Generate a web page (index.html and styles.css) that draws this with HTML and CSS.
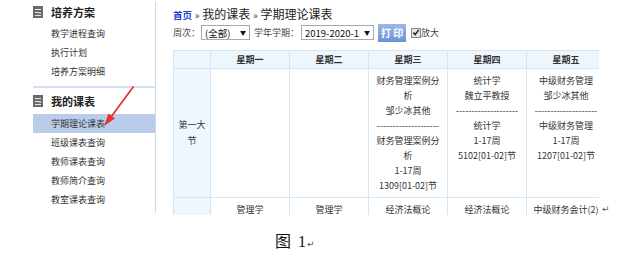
FILE: index.html
```html
<!DOCTYPE html>
<html lang="zh-CN">

<head>
    <meta charset="UTF-8">
    <title>学期理论课表</title>
    <link rel="stylesheet" href="styles.css">
</head>

<body>
    <div class="doc">
        <div class="shot">
            <div class="side">
                <div class="group">
                    <div class="group-title">
                        <svg class="ico" width="10" height="12" viewBox="0 0 10 12">
                            <rect x="0" y="0" width="10" height="12" fill="#6a6a6a"/>
                            <rect x="2" y="3" width="6" height="1" fill="#e8e8e8"/>
                            <rect x="2" y="6" width="4" height="1" fill="#e8e8e8"/>
                            <rect x="6" y="6" width="2" height="2" fill="#bbb"/>
                            <rect x="2" y="9" width="6" height="1" fill="#e8e8e8"/>
                        </svg>
                        培养方案
                    </div>
                    <div class="item">教学进程查询</div>
                    <div class="item">执行计划</div>
                    <div class="item">培养方案明细</div>
                </div>
                <div class="group second">
                    <div class="group-title">
                        <svg class="ico" width="10" height="12" viewBox="0 0 10 12">
                            <rect x="0" y="0" width="10" height="12" fill="#6a6a6a"/>
                            <rect x="2" y="3" width="6" height="1" fill="#e8e8e8"/>
                            <rect x="2" y="6" width="4" height="1" fill="#e8e8e8"/>
                            <rect x="6" y="6" width="2" height="2" fill="#bbb"/>
                            <rect x="2" y="9" width="6" height="1" fill="#e8e8e8"/>
                        </svg>
                        我的课表
                    </div>
                    <div class="item active">学期理论课表</div>
                    <div class="item">班级课表查询</div>
                    <div class="item">教师课表查询</div>
                    <div class="item">教师简介查询</div>
                    <div class="item">教室课表查询</div>
                </div>
            </div>

            <div class="main">
                <div class="crumb">
                    <a class="home" href="#">首页</a>
                    <span class="sep">»</span> 我的课表 <span class="sep">»</span> 学期理论课表
                </div>
                <div class="tools">
                    <span>周次：</span>
                    <span class="select w1">(全部)<span class="caret">▼</span></span>
                    <span class="lbl">学年学期：</span>
                    <span class="select w2">2019-2020-1<span class="caret">▼</span></span>
                    <span class="btn">打 印</span>
                    <span class="check">
                        <svg width="9" height="9" viewBox="0 0 9 9">
                            <path d="M1.5 4.5 L3.6 6.8 L7.6 1.6" fill="none" stroke="#222" stroke-width="1.6"/>
                        </svg>
                    </span>
                    <span>放大</span>
                </div>

                <table class="timetable">
                    <colgroup>
                        <col class="c0">
                        <col class="cd">
                        <col class="cd">
                        <col class="cd">
                        <col class="cd">
                        <col class="cd">
                    </colgroup>
                    <tr>
                        <th></th>
                        <th>星期一</th>
                        <th>星期二</th>
                        <th>星期三</th>
                        <th>星期四</th>
                        <th>星期五</th>
                    </tr>
                    <tr>
                        <td class="sec">第一大节</td>
                        <td></td>
                        <td></td>
                        <td>财务管理案例分析<br>邹少冰其他<br>--------------------<br>财务管理案例分析<br>1-17周<br>1309[01-02]节</td>
                        <td>统计学<br>魏立平教授<br>--------------------<br>统计学<br>1-17周<br>5102[01-02]节</td>
                        <td>中级财务管理<br>邹少冰其他<br>--------------------<br>中级财务管理<br>1-17周<br>1207[01-02]节</td>
                    </tr>
                    <tr>
                        <td class="sec"></td>
                        <td>管理学</td>
                        <td>管理学</td>
                        <td>经济法概论</td>
                        <td>经济法概论</td>
                        <td>中级财务会计(2)</td>
                    </tr>
                </table>
            </div>
        </div>
        <span class="mark">↵</span>
    </div>

    <p class="caption"><span class="fig">图</span>1<span class="mark">↵</span></p>

    <svg class="arrow" width="622" height="262" viewBox="0 0 622 262">
        <path d="M133.5 86.5 L111 117" stroke="#e8342c" stroke-width="1.8" fill="none"/>
        <polygon points="104,126 108.5,113.5 115,118.5" fill="#e8342c"/>
    </svg>
</body>

</html>
```

FILE: styles.css
```css
body {
    margin: 0;
    font-family: "Noto Sans CJK SC", "Noto Sans", sans-serif;
    color: #333;
    background: #fff;
    position: relative;
}

.doc {
    display: flex;
    align-items: flex-end;
    padding: 2px 0 0 33px;
}

.shot {
    display: flex;
    width: 566px;
    height: 213px;
    overflow: hidden;
}

.mark {
    font-family: "DejaVu Sans", sans-serif;
    font-size: 9px;
    color: #555;
    line-height: 12px;
    margin-left: 3px;
}

/* sidebar */
.side {
    width: 122px;
    height: 211px;
    flex: none;
    border-right: 1px solid #c9d9ef;
}

.group-title {
    display: flex;
    align-items: center;
    height: 20px;
    font-size: 11px;
    font-weight: bold;
    color: #222;
    margin-bottom: 2px;
}

.ico {
    margin-right: 8px;
}

.second {
    border-top: 2px solid #d5e1f2;
    margin-top: 5px;
}

.second .group-title {
    margin: 3px 0;
}

.item {
    height: 19px;
    line-height: 19px;
    padding-left: 18px;
    font-size: 9px;
    color: #333;
}

.item.active {
    background-color: #b9cdeb;
}

/* main */
.main {
    margin-left: 17px;
    padding-top: 3px;
    flex: none;
    width: 430px;
    font-size: 9px;
}

.crumb {
    height: 18px;
    line-height: 18px;
    font-size: 12px;
    color: #222;
    white-space: nowrap;
}

.home {
    font-size: 9.5px;
    font-weight: bold;
    color: #1f3fcf;
    text-decoration: none;
}

.sep {
    font-size: 10px;
    color: #444;
}

.tools {
    display: flex;
    align-items: center;
    height: 17px;
    margin-top: 1px;
    white-space: nowrap;
    color: #444;
}

.select {
    display: inline-flex;
    align-items: center;
    justify-content: space-between;
    height: 13px;
    padding: 0 3px;
    border: 1px solid #a9a9a9;
    color: #111;
    font-size: 9.5px;
    box-sizing: content-box;
}

.select.w1 {
    width: 41px;
    margin-left: 1px;
}

.select.w2 {
    width: 65px;
}

.caret {
    font-size: 6px;
    color: #111;
}

.lbl {
    margin: 0 2px 0 4px;
}

.btn {
    display: inline-block;
    width: 28px;
    height: 18px;
    line-height: 18px;
    margin: 0 5px 0 4px;
    text-align: center;
    color: #fff;
    font-size: 10px;
    font-weight: bold;
    background: linear-gradient(#9ab8ea, #6a93d8);
}

.check {
    width: 8px;
    height: 8px;
    border: 1px solid #888;
    background: #e6e6e6;
    display: inline-flex;
    align-items: center;
    justify-content: center;
}

/* timetable */
.timetable {
    border-collapse: collapse;
    table-layout: fixed;
    width: 431px;
    margin-top: 9px;
    font-size: 9px;
    color: #333;
}

.c0 {
    width: 37px;
}

.cd {
    width: 79px;
}

.timetable th,
.timetable td {
    border: 1px solid #d4e5f6;
    text-align: center;
    padding: 4px 4px 4px;
    line-height: 15px;
    vertical-align: top;
}

.timetable th {
    background-color: #eef6fd;
    padding: 1px 2px;
    font-weight: bold;
    color: #333;
}

.timetable td.sec {
    background-color: #eff7fe;
    vertical-align: middle;
    padding: 0 4px;
    line-height: 16px;
}

.caption {
    margin: 13px 0 0 275px;
    font-family: "Liberation Serif", "Noto Sans CJK SC", serif;
    font-size: 16px;
    color: #111;
}

.fig {
    margin-right: 7px;
}

.caption .mark {
    margin-left: 1px;
}

.arrow {
    position: absolute;
    left: 0;
    top: 0;
    pointer-events: none;
}
```
